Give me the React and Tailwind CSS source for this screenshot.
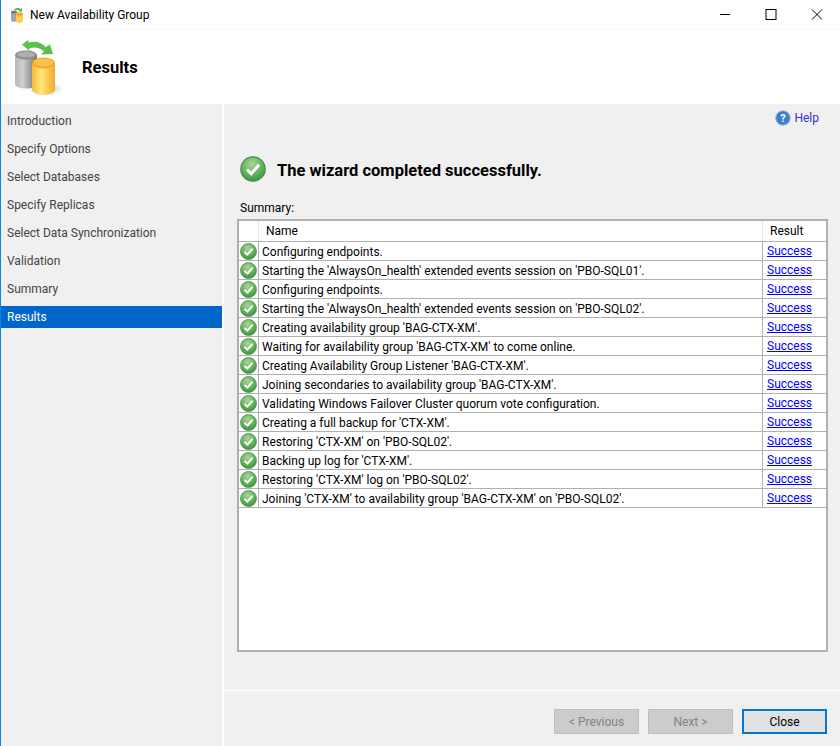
const steps = ["Introduction","Specify Options","Select Databases","Specify Replicas","Select Data Synchronization","Validation","Summary","Results"];
const rows = [
"Configuring endpoints.",
"Starting the 'AlwaysOn_health' extended events session on 'PBO-SQL01'.",
"Configuring endpoints.",
"Starting the 'AlwaysOn_health' extended events session on 'PBO-SQL02'.",
"Creating availability group 'BAG-CTX-XM'.",
"Waiting for availability group 'BAG-CTX-XM' to come online.",
"Creating Availability Group Listener 'BAG-CTX-XM'.",
"Joining secondaries to availability group 'BAG-CTX-XM'.",
"Validating Windows Failover Cluster quorum vote configuration.",
"Creating a full backup for 'CTX-XM'.",
"Restoring 'CTX-XM' on 'PBO-SQL02'.",
"Backing up log for 'CTX-XM'.",
"Restoring 'CTX-XM' log on 'PBO-SQL02'.",
"Joining 'CTX-XM' to availability group 'BAG-CTX-XM' on 'PBO-SQL02'.",
];

function Check({ size, id }) {
  return (
    <svg width={size} height={size} viewBox="0 0 26 26" className="shrink-0">
      <defs>
        <radialGradient id={id} cx="0.45" cy="0.3" r="0.8">
          <stop offset="0" stopColor="#a8d89a" />
          <stop offset="0.55" stopColor="#62b058" />
          <stop offset="1" stopColor="#2f8a35" />
        </radialGradient>
      </defs>
      <circle cx="13" cy="13" r="12.2" fill={`url(#${id})`} stroke="#4d8a50" strokeWidth="1.2" />
      <path d="M7 13.5l4.2 4.2L19.2 8.8" fill="none" stroke="#fff" strokeWidth="3" />
    </svg>
  );
}

function DbIcon() {
  return (
    <svg width="50" height="57" viewBox="0 0 50 57" className="shrink-0">
      <defs>
        <linearGradient id="gray" x1="0" x2="1" y1="0" y2="0">
          <stop offset="0" stopColor="#b8b8b8" /><stop offset="0.35" stopColor="#cfcfcf" /><stop offset="1" stopColor="#6f6f6f" />
        </linearGradient>
        <linearGradient id="yel" x1="0" x2="1" y1="0" y2="0">
          <stop offset="0" stopColor="#f8b93a" /><stop offset="0.4" stopColor="#ffe67c" /><stop offset="1" stopColor="#f5a92a" />
        </linearGradient>
        <radialGradient id="shadow"><stop offset="0" stopColor="#bbbbbb" /><stop offset="1" stopColor="#ffffff" /></radialGradient>
      </defs>
      <ellipse cx="32" cy="50" rx="18" ry="6" fill="url(#shadow)" />
      <path d="M1 16v29c0 2.500 5 4.500 11 4.500s11-2 11-4.500V16z" fill="url(#gray)" />
      <ellipse cx="12" cy="16" rx="11" ry="4.500" fill="#8e8e8e" />
      <ellipse cx="12" cy="15.500" rx="9" ry="3" fill="#adadad" />
      <path d="M18 24v26c0 3 5 6 11.500 6S41 53 41 50V24z" fill="url(#yel)" />
      <ellipse cx="29.500" cy="24" rx="11.500" ry="5.500" fill="#f5a92a" />
      <ellipse cx="29.500" cy="23.500" rx="9.500" ry="3.800" fill="#fcc24e" />
      <path d="M8 5.500L14 1 14.500 3.500C21 1.500 28 3.500 31.500 8L36 5.500 39 15 27 15.500 30 12.500C26 8.500 20 7.500 15 9.500L15.500 12z" fill="#5cc04c" />
    </svg>
  );
}

function SmallDb() {
  return (
    <svg width="16" height="16" viewBox="0 0 16 16" className="shrink-0">
      <path d="M1 5v8c0 1 1.500 2 3 2s3-1 3-2V5z" fill="#a5a5a5" />
      <ellipse cx="4" cy="5" rx="3" ry="1.500" fill="#777" />
      <path d="M6 7v7c0 1 2 2 3.500 2S13 15 13 14V7z" fill="#fbd050" />
      <ellipse cx="9.500" cy="7" rx="3.500" ry="1.800" fill="#f0a828" />
      <path d="M4 2.500C6 .5 9 .5 11 2l1-1v3.500H8.500l1-1C8 2.500 6.500 2.500 5 3.500z" fill="#4fb645" />
    </svg>
  );
}

export default function App() {
  return (
    <div className="w-[840px] h-[746px] flex flex-col bg-white border-l border-l-[#0c86e0] overflow-hidden text-[12px] text-black" style={{ fontFamily: 'Roboto, sans-serif' }}>
      <div className="h-[30px] flex items-center pl-[9px] shrink-0 border-b border-b-[#f8f8f8]">
        <SmallDb />
        <span className="ml-[4px]">New Availability Group</span>
        <div className="ml-auto flex items-center">
          <svg width="46" height="30" viewBox="0 0 46 30" className="block"><path d="M18 14.500h10" stroke="#000" /></svg>
          <svg width="46" height="30" viewBox="0 0 46 30" className="block"><rect x="18" y="9.500" width="10" height="10" fill="none" stroke="#000" /></svg>
          <svg width="46" height="30" viewBox="0 0 46 30" className="block"><path d="M18 9.500l10 10M28 9.500l-10 10" stroke="#000" /></svg>
        </div>
      </div>
      <div className="h-[74px] flex items-center pl-[13px] shrink-0">
        <DbIcon />
        <span className="ml-[18px] mt-[2px] text-[16.5px] font-bold">Results</span>
      </div>
      <div className="flex flex-1 min-h-0">
        <div className="w-[221px] bg-[#f0f0f0] pt-[6px] flex flex-col gap-[6px]">
          {steps.map((s) => (
            <div key={s} className={`h-[22px] flex items-center pl-[6px] ${s === "Results" ? "bg-[#0066cc] text-white" : "text-[#444444]"}`}>{s}</div>
          ))}
        </div>
        <div className="w-[2px] bg-white" />
        <div className="flex-1 bg-[#f0f0f0] flex flex-col">
          <div className="flex justify-end items-center h-[26px] pt-[1px] pr-[21px]">
            <svg width="16" height="16" viewBox="0 0 16 16">
              <circle cx="8" cy="8" r="7.300" fill="#3f7fc9" stroke="#9fbfe0" />
              <text x="8" y="12" textAnchor="middle" fontSize="11" fontWeight="bold" fill="#fff">?</text>
            </svg>
            <span className="ml-[3px] text-[#3333cc]">Help</span>
          </div>
          <div className="flex items-center h-[26px] mt-[26px] pl-[16px]">
            <Check size={26} id="big-check" />
            <span className="ml-[11px] mt-[5px] text-[16.5px] font-bold">The wizard completed successfully.</span>
          </div>
          <div className="mt-[18px] pl-[16px] h-[16px] leading-[16px]">Summary:</div>
          <div className="mt-[3px] ml-[13px] w-[591px] h-[433px] border-2 border-[#b0b0b0] bg-white flex flex-col">
            <div className="flex h-[21px] shrink-0 border-b border-b-[#b0b0b0]">
              <div className="w-[20px] border-r border-r-[#e5e5e5]" />
              <div className="w-[504px] pl-[7px] flex items-center border-r border-r-[#e5e5e5]">Name</div>
              <div className="flex-1 pl-[7px] flex items-center">Result</div>
            </div>
            {rows.map((r, i) => (
              <div key={i} className="flex h-[19px] shrink-0 border-b border-b-[#b0b0b0]">
                <div className="w-[20px] flex items-center justify-center border-r border-r-[#b0b0b0]"><Check size={17} id={`c${i}`} /></div>
                <div className="w-[504px] pl-[3px] pt-[1px] flex items-center border-r border-r-[#b0b0b0] whitespace-nowrap">{r}</div>
                <div className="flex-1 pl-[4px] flex items-center"><a className="text-[#0000ff] underline">Success</a></div>
              </div>
            ))}
          </div>
          <div className="mt-[38px] h-[1px] bg-white" />
          <div className="flex justify-end gap-[9px] pt-[18px] pr-[13px]">
            <button className="w-[85px] h-[25px] bg-[#cccccc] border border-[#bfbfbf] text-[#838383]">&lt; Previous</button>
            <button className="w-[85px] h-[25px] bg-[#cccccc] border border-[#bfbfbf] text-[#838383]">Next &gt;</button>
            <button className="w-[85px] h-[25px] bg-[#e1e1e1] border-2 border-[#0078d7]">Close</button>
          </div>
        </div>
      </div>
    </div>
  );
}
